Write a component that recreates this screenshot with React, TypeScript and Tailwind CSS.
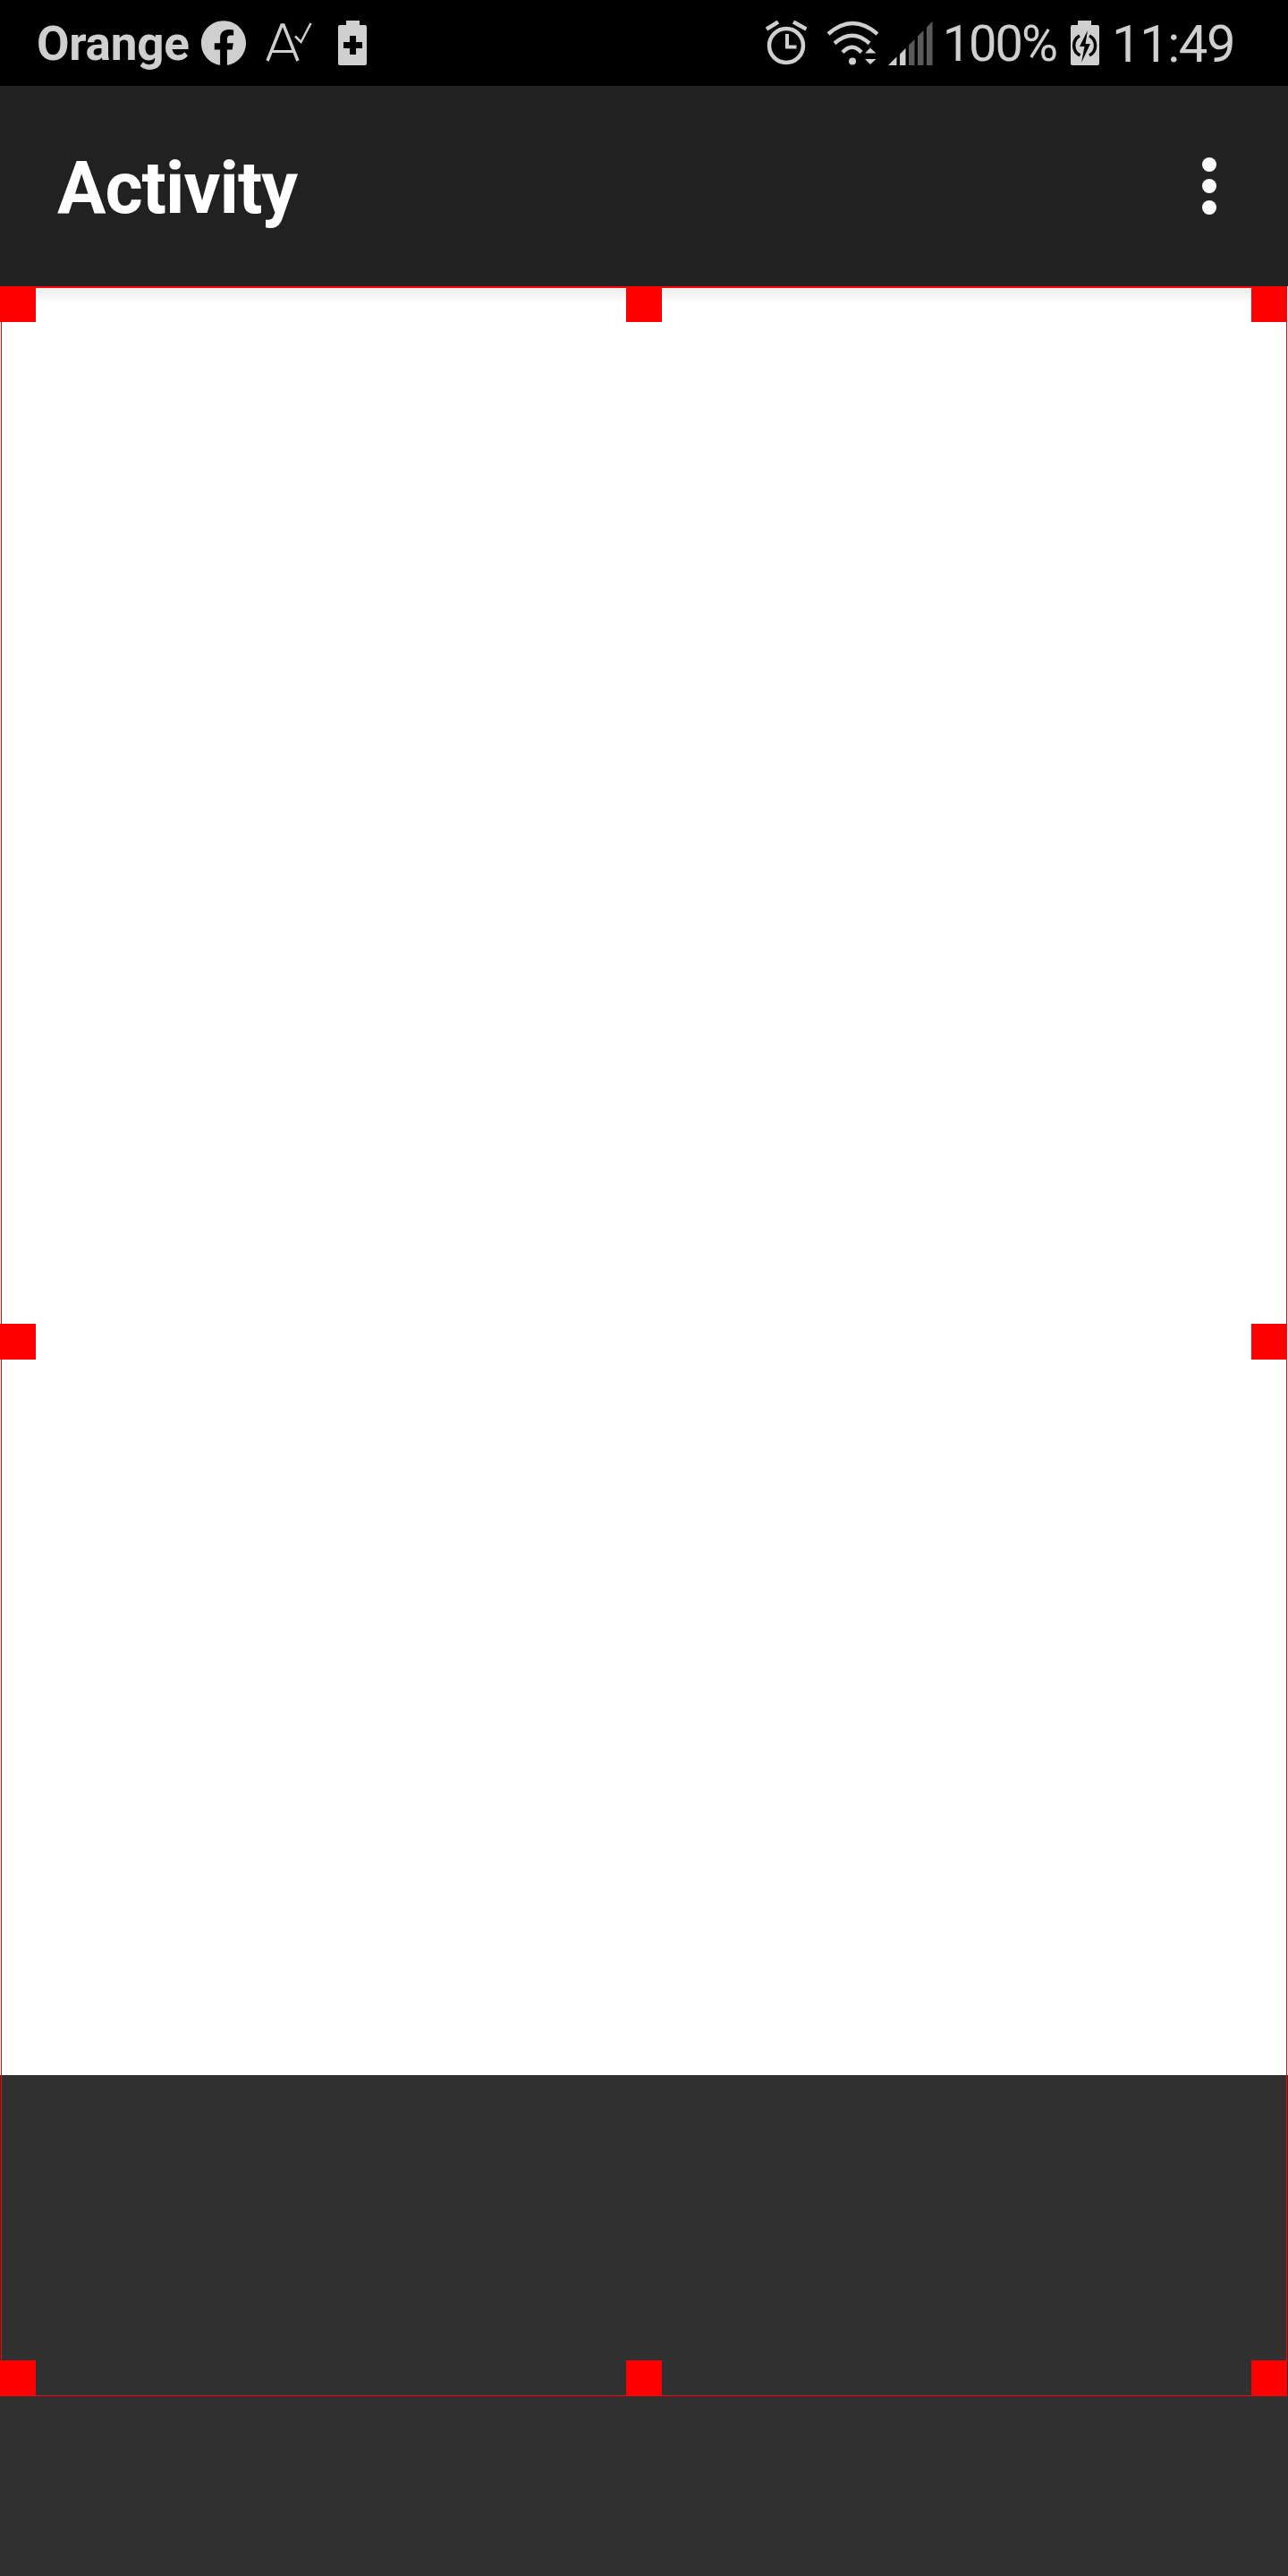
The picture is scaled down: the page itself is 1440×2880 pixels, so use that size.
export default function App() {
  const c = "#cfcfcf";
  return (
    <div className="w-[1440px] h-[2880px] flex flex-col bg-[#303030] overflow-hidden font-['Roboto',sans-serif]">
      {/* Status bar */}
      <div className="h-[96px] shrink-0 bg-black flex items-center justify-between pl-[41px] pr-[60px] text-[#cfcfcf]">
        <div className="flex items-center">
          <span className="w-[169px] mt-[3px] text-[53px] leading-none font-bold tracking-[-0.25px]">Orange</span>
          <svg className="ml-[15px]" width="50" height="50" viewBox="0 0 24 24" fill={c}>
            <path d="M24 12.073c0-6.627-5.373-12-12-12s-12 5.373-12 12c0 5.99 4.388 10.954 10.125 11.854v-8.385H7.078v-3.47h3.047V9.43c0-3.007 1.792-4.669 4.533-4.669 1.312 0 2.686.235 2.686.235v2.953H15.83c-1.491 0-1.956.925-1.956 1.874v2.25h3.328l-.532 3.47h-2.796v8.385C19.612 23.027 24 18.062 24 12.073z" />
          </svg>
          <svg className="ml-[20px]" width="55" height="50" viewBox="0 0 55 50" fill="none" stroke={c}>
            <path d="M4 45 L20 5 L22 5 L38 45" strokeWidth="3.5" />
            <path d="M9 34.5 H33" strokeWidth="3" />
            <path d="M35 17.5 L41.5 24 L52.5 3" strokeWidth="2.5" />
          </svg>
          <svg className="ml-[28px]" width="32" height="50" viewBox="0 0 32 50" fill={c}>
            <path fillRule="evenodd" d="M9 0h15v5h6a2 2 0 0 1 2 2v41a2 2 0 0 1-2 2H2a2 2 0 0 1-2-2V7a2 2 0 0 1 2-2h7z M13 17v7H6v7h7v7h7v-7h7v-7h-7v-7z" />
          </svg>
        </div>
        <div className="flex items-center">
          <svg width="46" height="50" viewBox="0 0 46 50" fill="none" stroke={c}>
            <circle cx="23" cy="28" r="19" strokeWidth="4.5" />
            <path d="M24 15V29.5H34.5" strokeWidth="4" />
            <path d="M1 9.5L14 1.5M31 1.5L45.5 9.5" strokeWidth="4.5" />
          </svg>
          <svg className="ml-[22px]" width="58" height="50" viewBox="0 0 58 50" fill="none" stroke={c}>
            <path d="M2 15Q29 -9 57 15" strokeWidth="4.5" />
            <path d="M9 25.5Q29 8 48 25.5" strokeWidth="4.5" />
            <path d="M18 35.5Q29 24 39 35.5" strokeWidth="4.5" />
            <circle cx="29" cy="45.5" r="4" fill={c} stroke="none" />
            <path d="M43 36.5L49 30.5L55.5 36.5ZM43 43L49 49L55.5 43Z" fill={c} stroke="none" />
          </svg>
          <svg className="ml-[10px]" width="51" height="50" viewBox="0 0 51 50">
            <path d="M1 50L10.5 40.5V50Z" fill={c} />
            <path d="M14 37.5L20.5 31V50H14Z" fill={c} />
            <path d="M24 27.5L30.5 21V50H24Z" fill="#5a5a5a" />
            <path d="M34 17.5L40.5 11V50H34Z" fill="#5a5a5a" />
            <path d="M44 7.5L50.5 1V50H44Z" fill="#5a5a5a" />
          </svg>
          <span className="ml-[11px] mt-[1px] text-[56px] leading-none tracking-[-2px]">100%</span>
          <svg className="ml-[16px]" width="32" height="50" viewBox="0 0 32 50" fill={c}>
            <path d="M8 0h15v5h7a2 2 0 0 1 2 2v41a2 2 0 0 1-2 2H2a2 2 0 0 1-2-2V7a2 2 0 0 1 2-2h6z" />
            <path d="M19 11L10 29h5.5L12 47l10-21h-5.5z" fill="#000" />
            <path d="M10 17A12.5 12.5 0 0 0 10.5 39M21 17A12.5 12.5 0 0 1 21 39" fill="none" stroke="#000" strokeWidth="3.5" />
          </svg>
          <span className="ml-[14px] mt-[1px] text-[58px] leading-none tracking-[-1.5px]">11:49</span>
        </div>
      </div>

      {/* App bar */}
      <div className="h-[224px] shrink-0 bg-[#212121] flex items-start justify-between pl-[64px] pr-[80px]">
        <span className="mt-[67px] text-[81px] leading-[96px] font-bold text-white tracking-[-1px]">Activity</span>
        <div className="mt-[80px] flex flex-col gap-[8px]">
          <span className="w-[16px] h-[16px] rounded-full bg-white" />
          <span className="w-[16px] h-[16px] rounded-full bg-white" />
          <span className="w-[16px] h-[16px] rounded-full bg-white" />
        </div>
      </div>

      {/* Editor canvas */}
      <div className="relative flex-1">
        <div className="h-[2000px] bg-gradient-to-b from-[#ececec] via-white via-[1%] to-white" />
        {/* Crop frame */}
        <div className="absolute left-[1px] top-0 w-[1438px] h-[2359px] border border-[#ff0000] border-t-2" />
        <span className="absolute left-0 top-0 w-[40px] h-[40px] bg-[#ff0000]" />
        <span className="absolute left-[700px] top-0 w-[40px] h-[40px] bg-[#ff0000]" />
        <span className="absolute left-[1399px] top-0 w-[40px] h-[40px] bg-[#ff0000]" />
        <span className="absolute left-0 top-[1160px] w-[40px] h-[40px] bg-[#ff0000]" />
        <span className="absolute left-[1399px] top-[1160px] w-[40px] h-[40px] bg-[#ff0000]" />
        <span className="absolute left-0 top-[2319px] w-[40px] h-[40px] bg-[#ff0000]" />
        <span className="absolute left-[700px] top-[2319px] w-[40px] h-[40px] bg-[#ff0000]" />
        <span className="absolute left-[1399px] top-[2319px] w-[40px] h-[40px] bg-[#ff0000]" />
      </div>
    </div>
  );
}
